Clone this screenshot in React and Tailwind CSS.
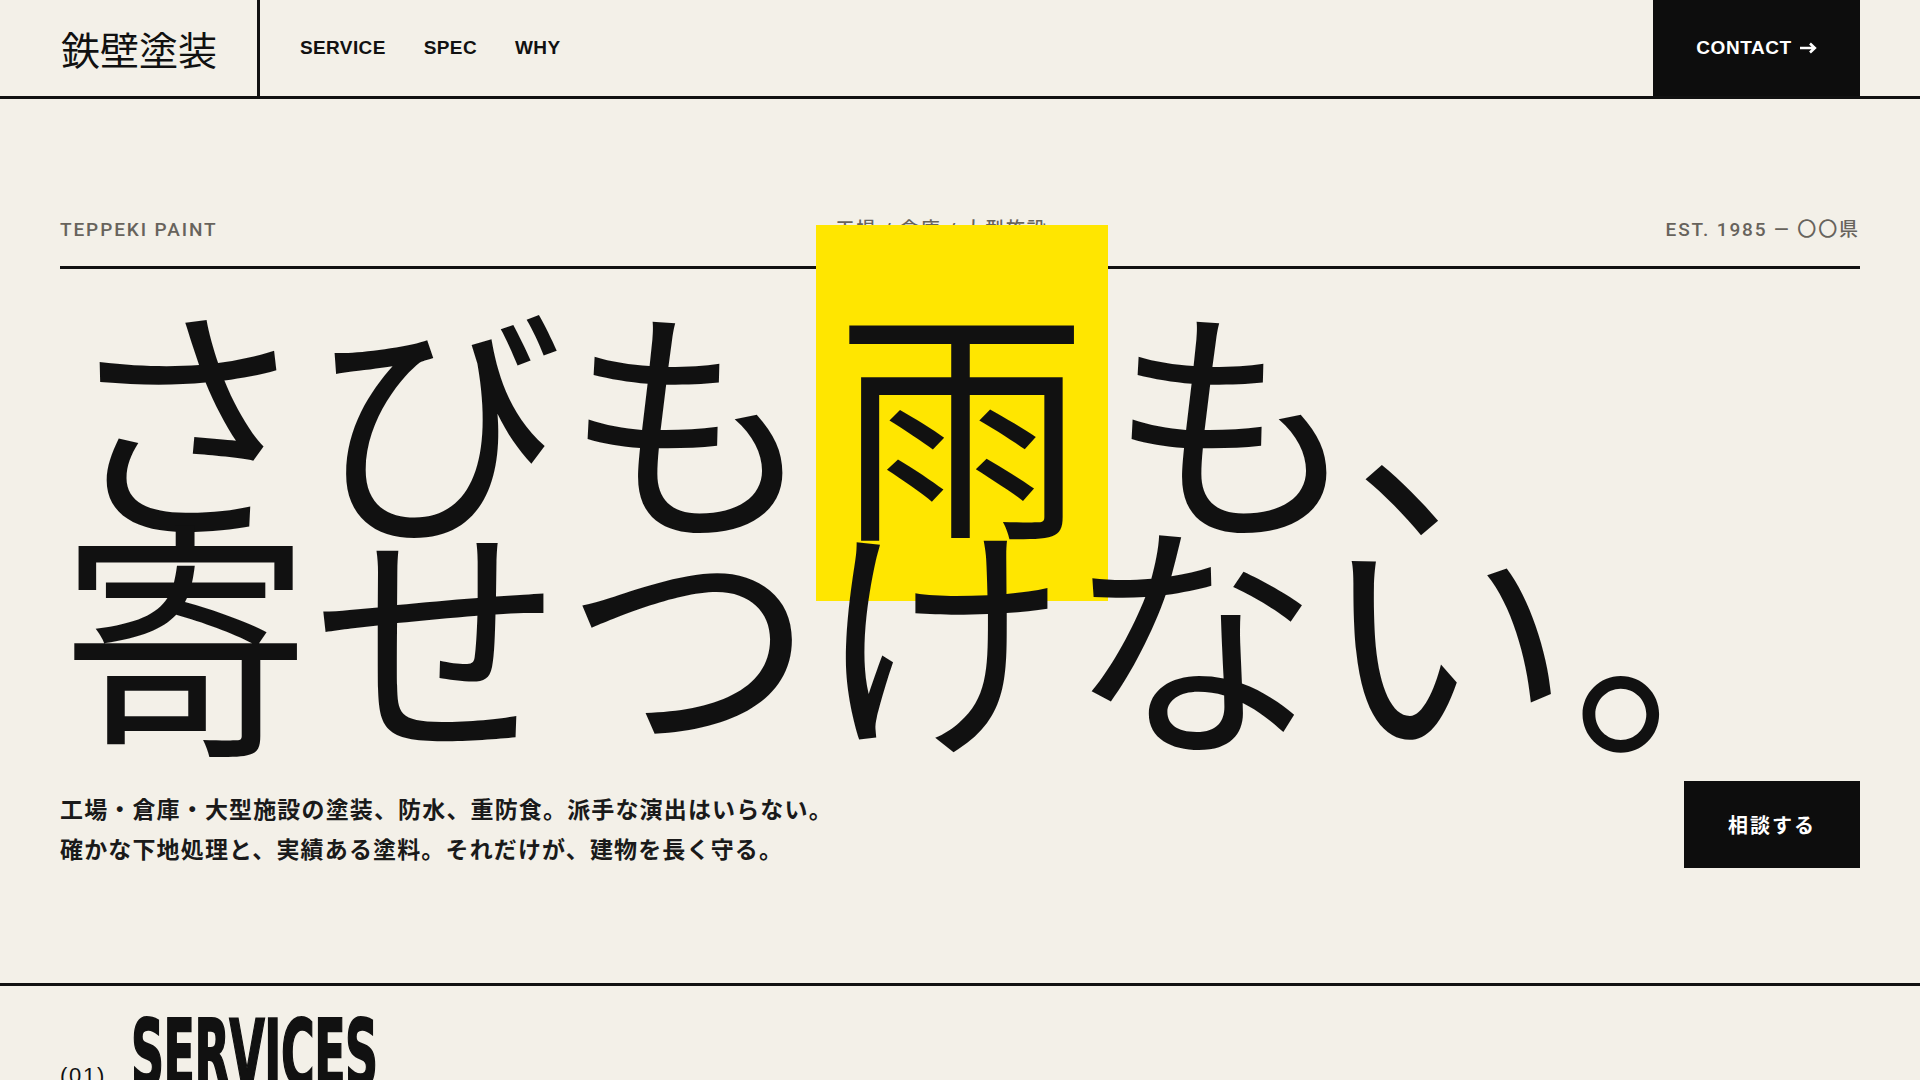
function Arrow() {
  return (
    <svg width="17" height="12" viewBox="0 0 17 12" className="ml-[8px] inline-block" aria-hidden="true">
      <path d="M0 6h14.5M10 1.5 14.8 6 10 10.5" fill="none" stroke="currentColor" strokeWidth="2.6" strokeLinejoin="miter" />
    </svg>
  );
}

export default function App() {
  return (
    <div className="min-h-screen bg-[#f3f0e8] font-['Liberation_Sans','Noto_Sans_CJK_JP',sans-serif] text-[#111]">
      <header className="flex h-[99px] items-stretch border-b-[3px] border-[#111]">
        <div className="flex w-[260px] items-center border-r-[3px] border-[#111] pl-[61px]">
          <span className="font-['Noto_Sans_CJK_JP',sans-serif] text-[39px] font-normal leading-none">鉄壁塗装</span>
        </div>
        <nav className="flex items-center gap-[38px] pl-[40px] text-[19px] font-bold tracking-[0.02em]">
          <a href="#service">SERVICE</a>
          <a href="#spec">SPEC</a>
          <a href="#why">WHY</a>
        </nav>
        <a href="#contact" className="ml-auto mr-[60px] flex w-[207px] items-center justify-center bg-[#0d0d0d] text-[19px] font-bold tracking-[0.03em] text-white">
          CONTACT
          <Arrow />
        </a>
      </header>

      <section className="border-b-[3px] border-[#111] px-[60px] pt-[117px] pb-[115px]">
        <div className="flex items-end justify-between border-b-[3px] border-[#111] pb-[23px] font-['Roboto','Noto_Sans_CJK_JP',sans-serif] text-[19px] font-medium leading-[27px] tracking-[0.1em] text-[#67635c]">
          <span>TEPPEKI PAINT</span>
          <span>工場 / 倉庫 / 大型施設</span>
          <span>EST. 1985 — 〇〇県</span>
        </div>
        <h1 className="mt-[35px] whitespace-nowrap font-['Noto_Sans_CJK_JP',sans-serif] text-[251px] font-normal leading-[216px] tracking-[1px] text-[#111]">
          さびも<span className="bg-[#ffe600] px-[20px] pt-[5px] pb-[8px]">雨</span>も、
          <br />
          寄せつけない。
        </h1>
        <div className="mt-[45px] flex items-end justify-between">
          <p className="font-['Noto_Sans_CJK_JP',sans-serif] text-[23px] font-bold leading-[40px] tracking-[0.05em] text-[#1a1a1a]">
            工場・倉庫・大型施設の塗装、防水、重防食。派手な演出はいらない。
            <br />
            確かな下地処理と、実績ある塗料。それだけが、建物を長く守る。
          </p>
          <a href="#contact" className="flex h-[87px] w-[176px] items-center justify-center bg-[#0d0d0d] font-['Noto_Sans_CJK_JP',sans-serif] text-[20px] font-bold tracking-[0.1em] text-white">
            相談する
          </a>
        </div>
      </section>

      <section id="service" className="px-[60px] pt-[23px] pb-[120px]">
        <div className="flex items-baseline gap-[25px]">
          <span className="relative -top-[3px] text-[22px] font-medium tracking-[0.08em]">(01)</span>
          <h2 className="origin-left scale-x-[0.555] font-['Liberation_Sans_Narrow','DejaVu_Sans_Condensed',sans-serif] text-[92px] font-bold leading-none tracking-[-0.01em] [-webkit-text-stroke:2px_#111]">
            SERVICES
          </h2>
        </div>
      </section>
    </div>
  );
}
